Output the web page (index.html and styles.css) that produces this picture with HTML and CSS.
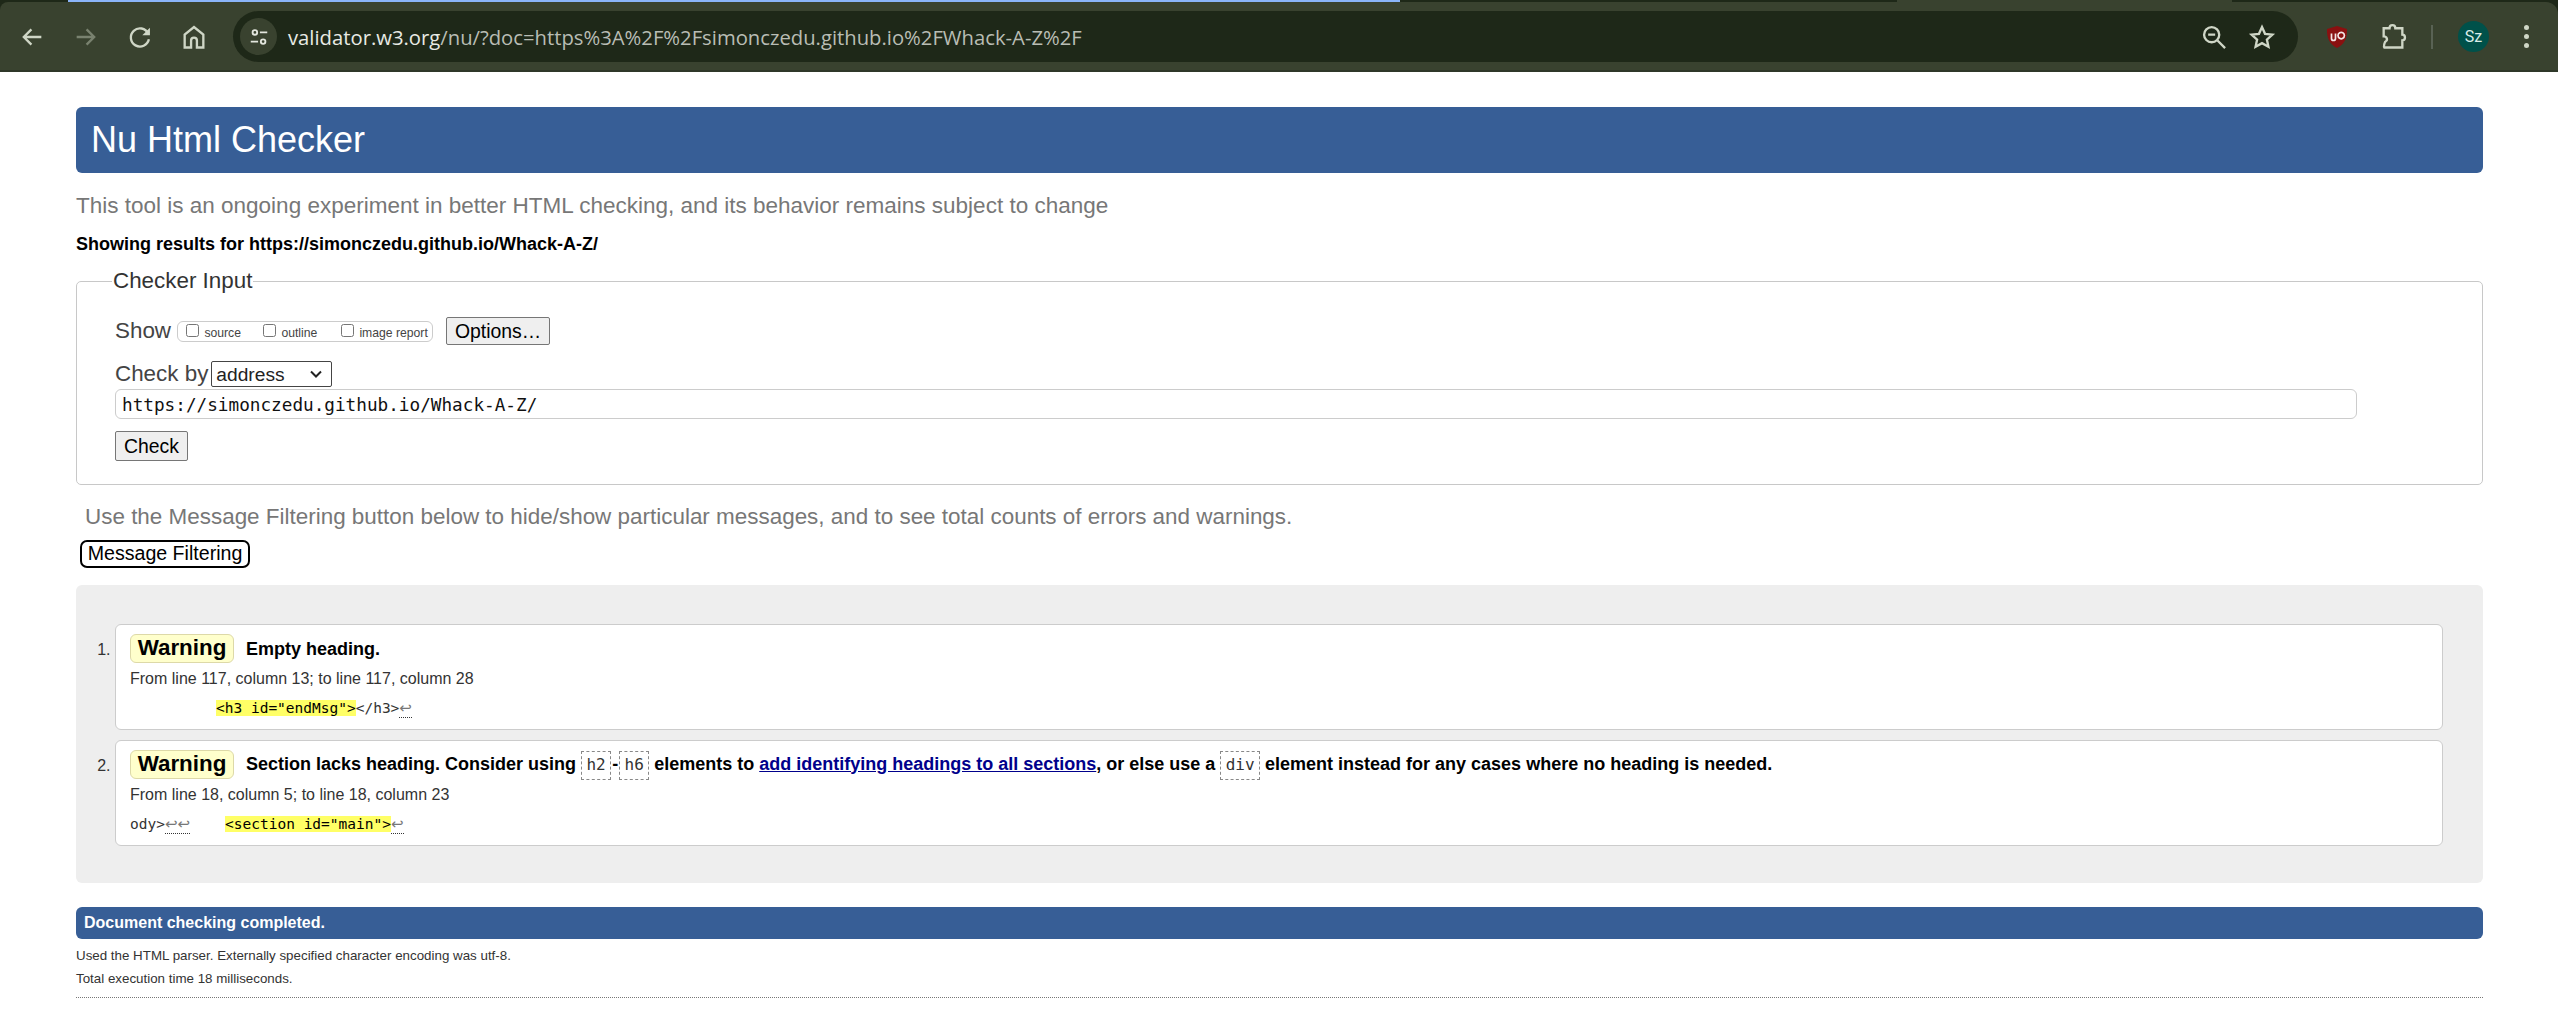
FILE: index.html
```html
<!DOCTYPE html>
<html>
<head>
	<title>Nu Html Checker</title>
	<link rel="stylesheet" href="styles.css">
</head>
<body>

	<!-- browser chrome -->
	<div class="chrome">
		<div class="tabstrip">
			<div class="tab-corner"></div>
			<div class="tab-progress"></div>
			<div class="tab-dark"></div>
			<div class="tab-light"></div>
			<div class="tab-rest"></div>
		</div>
		<div class="toolbar">
			<svg class="tb-icon back" viewBox="0 0 24 24"><path d="M20 12H5M11.500 5.500 5 12l6.500 6.500"/></svg>
			<svg class="tb-icon forward" viewBox="0 0 24 24"><path d="M4 12h15M12.500 5.500 19 12l-6.500 6.500"/></svg>
			<svg class="tb-icon reload" viewBox="0 0 24 24"><path d="M19 9A7.800 7.800 0 1 0 19.600 14"/><path class="solid" d="M20.500 4v6.500H14z"/></svg>
			<svg class="tb-icon home" viewBox="0 0 24 24"><path d="M4 21V10l8-6.500 8 6.500v11h-5.500v-6a2.500 2.500 0 0 0-5 0v6z"/></svg>
			<div class="omnibox">
				<span class="site-btn">
					<svg class="tune" viewBox="0 0 24 24"><circle cx="7.500" cy="7" r="2.500"/><path d="M13 7h8M3 17h8"/><circle cx="16.500" cy="17" r="2.500"/></svg>
				</span>
				<span class="url"><span class="url-host">validator.w3.org</span>/nu/?doc=https%3A%2F%2Fsimonczedu.github.io%2FWhack-A-Z%2F</span>
				<svg class="tb-icon zoom" viewBox="0 0 24 24"><circle cx="10" cy="10" r="6.500"/><path d="M7 10h6M15 15l6.500 6.500"/></svg>
				<svg class="tb-icon star" viewBox="0 0 24 24"><path d="M12 3.500l2.600 5.800 6.300.7-4.700 4.200 1.300 6.200L12 17.300l-5.500 3.100 1.300-6.200L3.100 10l6.300-.7z"/></svg>
			</div>
			<svg class="ublock" viewBox="0 0 24 24"><path d="M12 1 22 4c.3 9-2.500 15.500-10 19C4.500 19.500 1.700 13 2 4z" fill="#8a1010"/><path d="M6.500 8.500v5a2 2 0 0 0 4 0v-5M13 10.500a3.200 3.200 0 1 1 0 .1" fill="none" stroke="#f4e4e4" stroke-width="1.700"/></svg>
			<svg class="tb-icon puzzle" viewBox="0 0 24 24"><path d="M4 4.500h5c0-3.500 5-3.500 5 0h6v5.500c3 0 3 5 0 5v6H4.500c-.5-.5 0-5 1.500-5.500 1.500-1 1-4-2-4z"/></svg>
			<div class="tb-divider"></div>
			<div class="avatar">Sz</div>
			<div class="menu-dots"><span></span><span></span><span></span></div>
		</div>
	</div>

	<!-- page -->
	<div class="page">
		<h1 class="title">Nu Html Checker</h1>
		<p class="tagline">This tool is an ongoing experiment in better HTML checking, and its behavior remains subject to change</p>
		<p class="showing">Showing results for https://simonczedu.github.io/Whack-A-Z/</p>

		<fieldset class="checker">
			<legend>Checker Input</legend>
			<div class="show-row">
				<span>Show</span>
				<span class="show-box">
					<label class="opt opt-source"><input type="checkbox"> source</label>
					<label class="opt opt-outline"><input type="checkbox"> outline</label>
					<label class="opt"><input type="checkbox"> image report</label>
				</span>
				<button class="btn btn-options" type="button">Options…</button>
			</div>
			<div class="check-row">
				<span>Check by</span>
				<select class="check-select"><option>address</option></select>
			</div>
			<input class="doc-input" type="text" value="https://simonczedu.github.io/Whack-A-Z/">
			<button class="btn btn-check" type="button">Check</button>
		</fieldset>

		<p class="filter-note">Use the Message Filtering button below to hide/show particular messages, and to see total counts of errors and warnings.</p>
		<button class="btn-filter" type="button">Message Filtering</button>

		<div class="results">
			<ol class="messages">
				<li class="msg">
					<p class="msg-head"><strong class="badge">Warning</strong> <span>Empty heading.</span></p>
					<p class="location">From line 117, column 13; to line 117, column 28</p>
					<p class="extract"><code class="pad-first"></code><mark>&lt;h3 id="endMsg"&gt;</mark>&lt;/h3&gt;<span class="lf">↩</span></p>
				</li>
				<li class="msg">
					<p class="msg-head"><strong class="badge">Warning</strong> <span>Section lacks heading. Consider using <code class="chip">h2</code><b class="dash">-</b><code class="chip">h6</code> elements to <a href="#">add identifying headings to all sections</a>, or else use a <code class="chip">div</code> element instead for any cases where no heading is needed.</span></p>
					<p class="location">From line 18, column 5; to line 18, column 23</p>
					<p class="extract">ody&gt;<span class="lf">↩↩</span><code class="pad-second"></code><mark>&lt;section id="main"&gt;</mark><span class="lf">↩</span></p>
				</li>
			</ol>
		</div>

		<div class="done">Document checking completed.</div>
		<p class="note note-parser">Used the HTML parser. Externally specified character encoding was utf-8.</p>
		<p class="note">Total execution time 18 milliseconds.</p>
		<hr class="rule">
	</div>

</body>
</html>
```

FILE: styles.css
```css
html, body {
	margin: 0;
	padding: 0;
}

body {
	background: #fff;
	color: #000;
	font-family: "Liberation Sans", Arial, sans-serif;
	overflow: hidden;
}

/* browser chrome */
.chrome {
	background: #1e2818;
}

.tabstrip {
	display: flex;
	height: 2px;
}
.tab-corner {
	width: 68px;
}
.tab-progress {
	width: 1332px;
	background: #8ab4f8;
}
.tab-dark {
	width: 497px;
}
.tab-light {
	width: 335px;
	background: #39422f;
}
.tab-rest {
	flex: 1;
}

.toolbar {
	display: flex;
	align-items: center;
	height: 70px;
	padding-bottom: 1px;
	box-sizing: border-box;
	background: #39422f;
	border-radius: 8px 12px 0 0;
	box-shadow: inset 0 -2px 0 #2f3829;
}

.tb-icon {
	width: 28px;
	height: 28px;
	flex: none;
	fill: none;
	stroke: #cfd6c6;
	stroke-width: 2;
}
.tb-icon .solid {
	fill: #cfd6c6;
	stroke: none;
}
.back { margin-left: 18px; }
.forward { margin-left: 26px; stroke: #79826f; }
.reload { margin-left: 26px; }
.home { margin-left: 26px; }

.omnibox {
	display: flex;
	align-items: center;
	width: 2065px;
	height: 51px;
	margin-left: 25px;
	background: #1e2818;
	border-radius: 26px;
}
.site-btn {
	display: flex;
	align-items: center;
	justify-content: center;
	width: 37px;
	height: 37px;
	margin-left: 7px;
	border-radius: 50%;
	background: #39422f;
	flex: none;
}
.tune {
	width: 22px;
	height: 22px;
	fill: none;
	stroke: #e3e6de;
	stroke-width: 2;
}
.url {
	flex: 1;
	margin-left: 11px;
	font-family: "Open Sans", "Noto Sans", sans-serif;
	font-size: 20.250px;
	color: #b9bdb4;
	white-space: nowrap;
}
.url-host {
	color: #e8eae4;
}
.zoom {
	margin-right: 20px;
}
.star {
	margin-right: 22px;
}

.ublock {
	width: 24px;
	height: 26px;
	margin-left: 27px;
	flex: none;
}
.puzzle {
	margin-left: 30px;
}
.tb-divider {
	width: 2px;
	height: 24px;
	margin-left: 24px;
	background: #596254;
}
.avatar {
	width: 31px;
	height: 31px;
	margin-left: 25px;
	border-radius: 50%;
	background: #00514a;
	color: #d9ece8;
	font-family: Roboto, sans-serif;
	font-size: 16px;
	line-height: 31px;
	text-align: center;
	flex: none;
}
.menu-dots {
	display: flex;
	flex-direction: column;
	gap: 4px;
	margin-left: 35px;
}
.menu-dots span {
	width: 5px;
	height: 5px;
	border-radius: 50%;
	background: #cfd6c6;
}

/* page */
.page {
	padding: 35px 75px 0 76px;
}

.title {
	margin: 0;
	height: 66px;
	padding-left: 15px;
	background: #375e96;
	border-radius: 6px;
	color: #fff;
	font-size: 36px;
	font-weight: normal;
	line-height: 65px;
}

.tagline {
	margin: 20px 0 0;
	color: #777;
	font-size: 22.500px;
	line-height: 26px;
}

.showing {
	margin: 15px 0 0;
	font-size: 18px;
	font-weight: bold;
	line-height: 20px;
}

.checker {
	margin: 14px 0 0;
	padding: 23px 38px 0 38px;
	min-width: 0;
	height: 217px;
	box-sizing: border-box;
	border: 1px solid #c8c8c8;
	border-radius: 5px;
	font-size: 22.400px;
	color: #444;
}
.checker legend {
	margin-left: -3px;
	padding: 0 1px;
	font-size: 22.400px;
	line-height: 26px;
	color: #333;
}

.show-row {
	display: flex;
	align-items: center;
	height: 28px;
}
.show-box {
	display: flex;
	align-items: center;
	width: 256px;
	height: 21px;
	margin-left: 6px;
	box-sizing: border-box;
	border: 1px solid #ccc;
	border-radius: 6px;
	padding-left: 8px;
}
.opt {
	display: flex;
	align-items: center;
	font-size: 12.200px;
	color: #444;
	white-space: pre;
	padding-top: 3px;
}
.opt input {
	width: 13px;
	height: 13px;
	margin: -5px 2px 0 0;
}
.opt-source { width: 77px; }
.opt-outline { width: 78px; }

.btn {
	padding: 0;
	border: 1px solid #767676;
	border-radius: 2px;
	background: #efefef;
	color: #000;
	font-family: inherit;
	font-size: 19.400px;
}
.btn-options {
	width: 104px;
	height: 28px;
	margin-left: 13px;
}
.btn-check {
	display: block;
	width: 73px;
	height: 30px;
	margin-top: 12px;
}

.check-row {
	display: flex;
	align-items: center;
	height: 26px;
	margin-top: 16px;
	white-space: nowrap;
}
.check-select {
	appearance: none;
	width: 121px;
	height: 26px;
	margin-left: 3px;
	padding-left: 4px;
	border: 1px solid #444;
	border-radius: 2px;
	background: #fff url("data:image/svg+xml,%3Csvg xmlns='http://www.w3.org/2000/svg' viewBox='0 0 12 8'%3E%3Cpath d='M1 1.500 6 6.500l5-5' fill='none' stroke='%23222' stroke-width='2'/%3E%3C/svg%3E") no-repeat right 9px center / 12px 8px;
	font-family: inherit;
	font-size: 19.200px;
	color: #222;
}

.doc-input {
	display: block;
	width: 2242px;
	height: 30px;
	margin-top: 2px;
	padding: 2px 6px 0;
	box-sizing: border-box;
	border: 1px solid #ccc;
	border-radius: 6px;
	font-family: "DejaVu Sans Mono", monospace;
	font-size: 17.700px;
	color: #111;
}

.filter-note {
	margin: 19px 0 0 9px;
	color: #777;
	font-size: 22.450px;
	line-height: 26px;
}

.btn-filter {
	display: block;
	width: 170px;
	height: 28px;
	margin: 10px 0 0 4px;
	padding: 0 0 2px;
	border: 2px solid #000;
	border-radius: 7px;
	background: #fff;
	font-family: inherit;
	font-size: 19.600px;
}

.results {
	height: 298px;
	margin-top: 17px;
	padding: 39px 40px 0 39px;
	box-sizing: border-box;
	background: #eee;
	border-radius: 6px;
}

.messages {
	margin: 0;
	padding: 0;
	list-style: decimal;
	list-style-position: outside;
}

.msg {
	height: 106px;
	margin-bottom: 10px;
	padding: 8px 14px 0;
	box-sizing: border-box;
	background: #fff;
	border: 1px solid #ccc;
	border-radius: 6px;
	color: #333;
	font-size: 16px;
}
.msg::marker {
	font-size: 16px;
}

.msg-head {
	display: flex;
	align-items: center;
	height: 30px;
	margin: 0;
	color: #000;
	font-size: 18px;
	font-weight: bold;
	white-space: pre;
}
.msg-head span {
	margin-left: 12px;
	padding-top: 2px;
}
.badge {
	display: inline-block;
	width: 104px;
	height: 29px;
	box-sizing: border-box;
	background: #ffc;
	border: 1px solid #ddd9a8;
	border-radius: 6px;
	font-size: 22.400px;
	line-height: 26px;
	text-align: center;
}
.msg-head a {
	color: #00008b;
}
.chip {
	display: inline-block;
	height: 29px;
	padding: 0 4.400px;
	box-sizing: border-box;
	vertical-align: middle;
	border: 1px dashed #888;
	font-family: "DejaVu Sans Mono", monospace;
	font-size: 16px;
	font-weight: normal;
	line-height: 25px;
	color: #333;
}
.dash {
	margin: 0 1px;
}

.location {
	margin: 7px 0 0;
	line-height: 18px;
}

.extract {
	margin: 11px 0 0;
	font-family: "DejaVu Sans Mono", monospace;
	font-size: 14.500px;
	line-height: 18px;
	white-space: pre;
}
.extract mark {
	background: #ff6;
}
.pad-first {
	display: inline-block;
	width: 86px;
}
.pad-second {
	display: inline-block;
	width: 35px;
}
.lf {
	font-family: "DejaVu Sans", sans-serif;
	font-size: 15px;
	color: #777;
	border-bottom: 1px dotted #333;
}

.done {
	height: 32px;
	margin-top: 24px;
	padding-left: 8px;
	background: #375e96;
	border-radius: 6px;
	color: #fff;
	font-size: 16px;
	font-weight: bold;
	line-height: 31px;
}

.note {
	margin: 0;
	color: #333;
	font-size: 13.350px;
	line-height: 18px;
}
.note-parser {
	margin-top: 8px;
	margin-bottom: 5px;
}

.rule {
	height: 0;
	margin: 9px 0 0;
	border: 0;
	border-top: 1px dotted #777;
}
```
